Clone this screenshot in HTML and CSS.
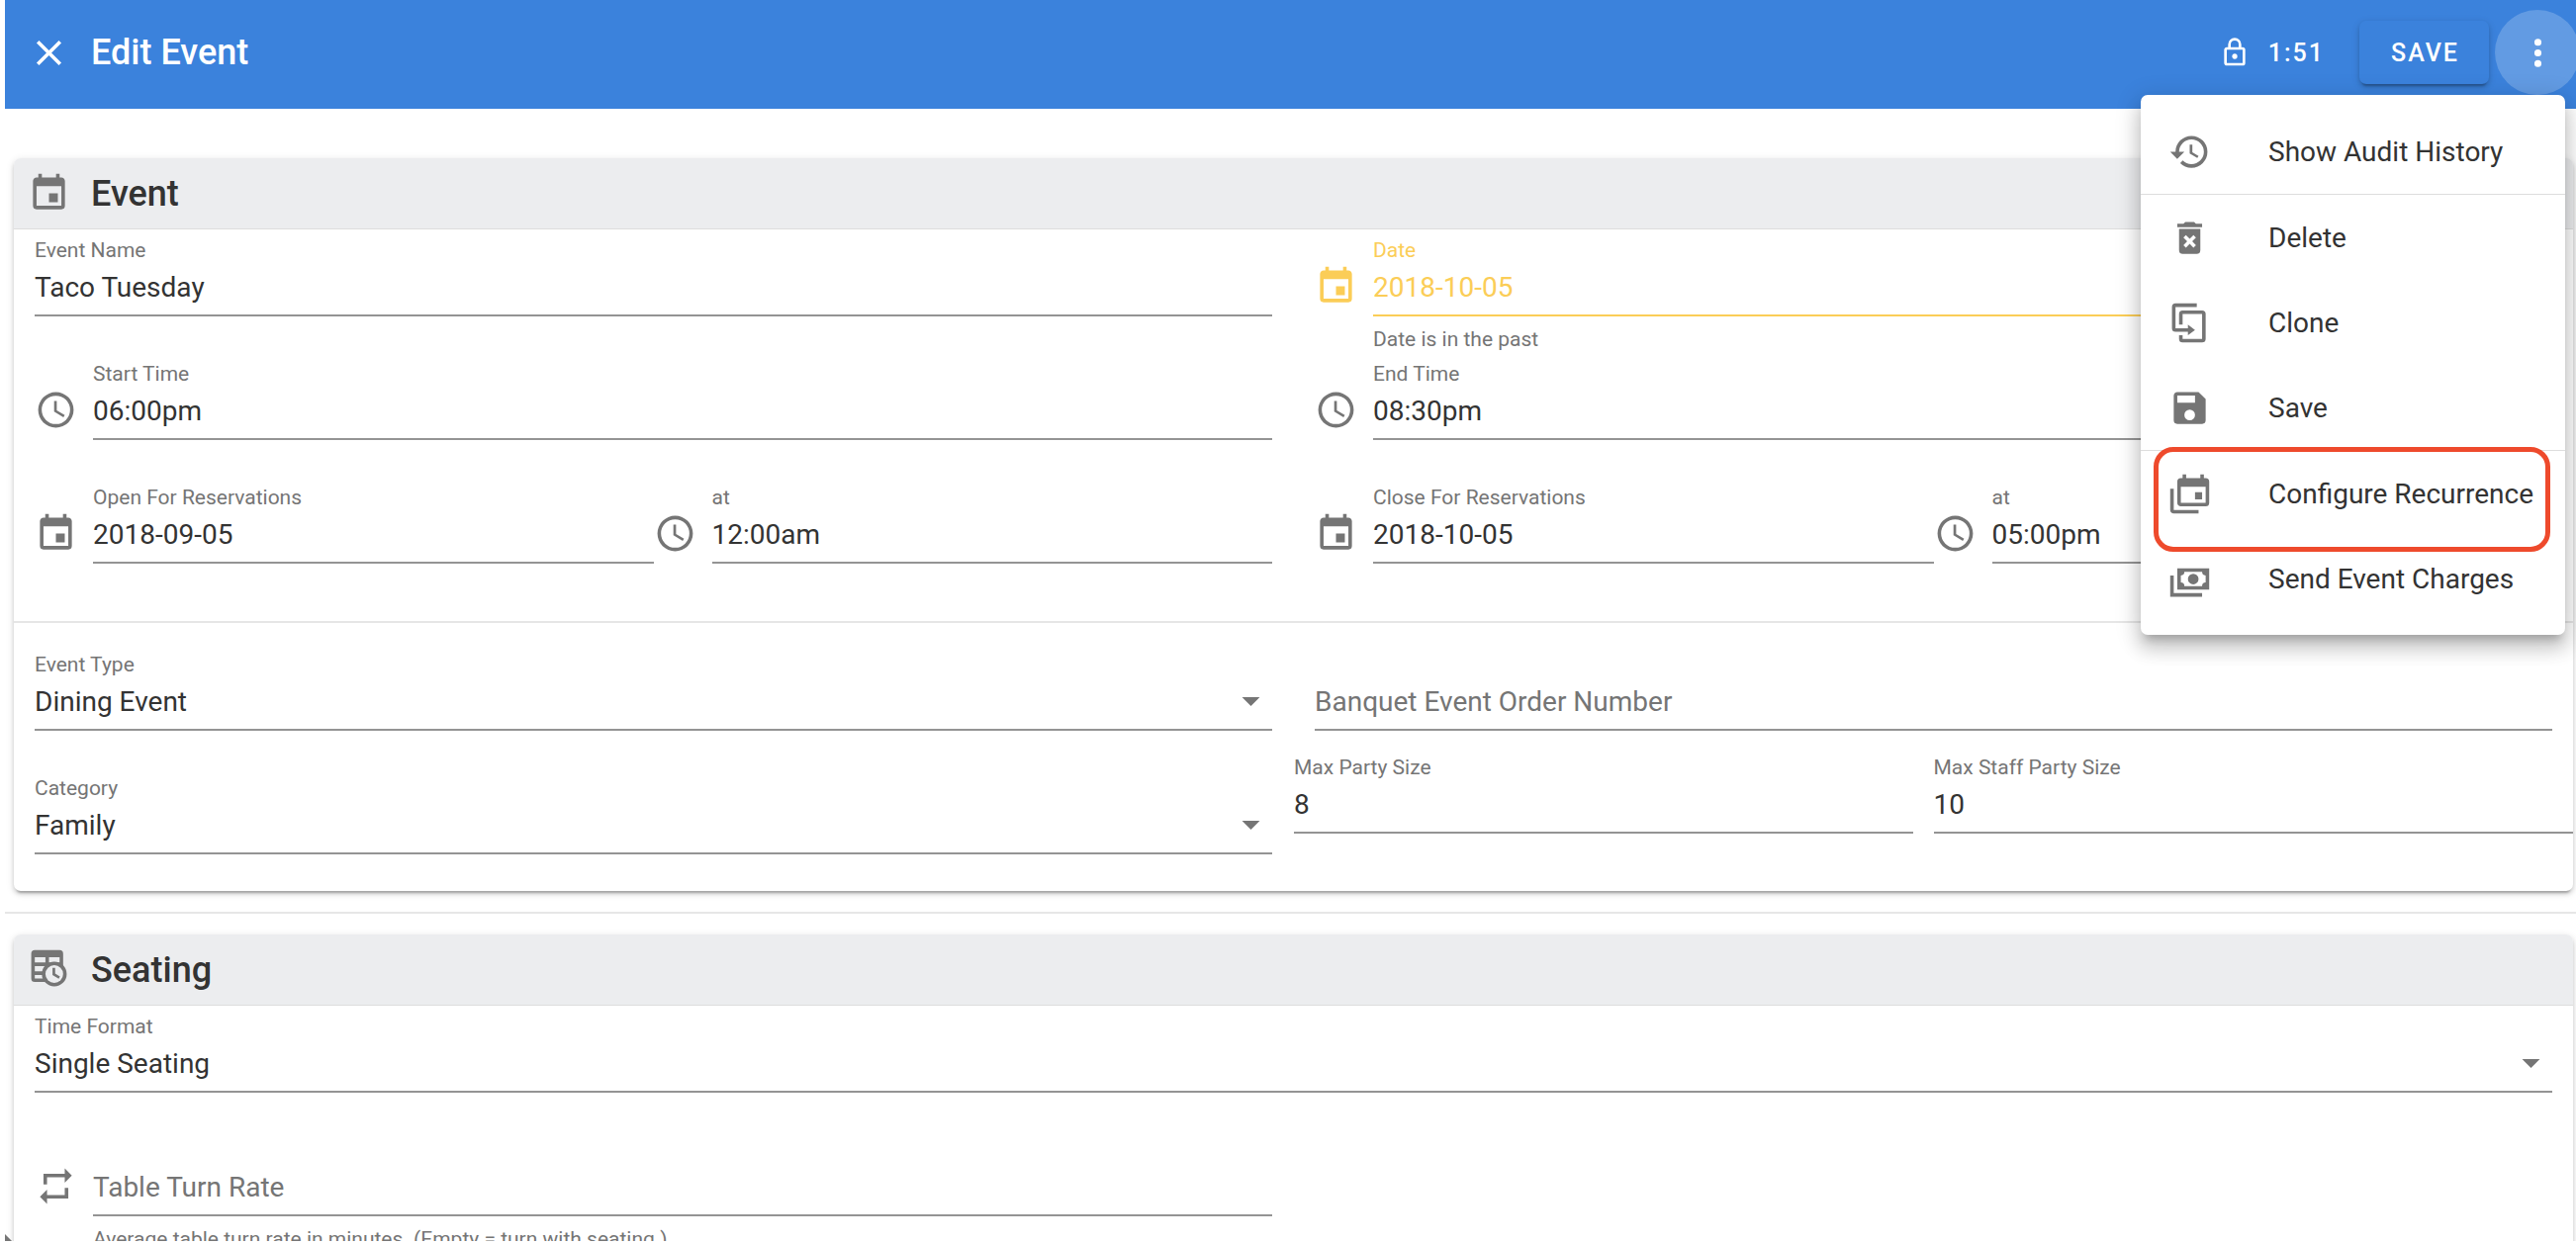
FILE: index.html
```html
<!DOCTYPE html>
<html lang="en">
<head>
    <meta charset="UTF-8">
    <meta name="viewport" content="width=device-width, initial-scale=1">
    <title>Edit Event</title>
    <link rel="stylesheet" href="styles.css">
</head>
<body>
    <!-- shared icons -->
    <svg class="sprite" aria-hidden="true">
        <symbol id="calendar" viewBox="0 0 24 24"><path d="M19,19H5V8H19M16,1V3H8V1H6V3H5C3.89,3 3,3.89 3,5V19A2,2 0 0,0 5,21H19A2,2 0 0,0 21,19V5C21,3.89 20.1,3 19,3H18V1M17,12H12V17H17V12Z"/></symbol>
        <symbol id="clock" viewBox="0 0 24 24"><path d="M12,20A8,8 0 0,0 20,12A8,8 0 0,0 12,4A8,8 0 0,0 4,12A8,8 0 0,0 12,20M12,2A10,10 0 0,1 22,12A10,10 0 0,1 12,22C6.47,22 2,17.5 2,12A10,10 0 0,1 12,2M12.5,7V12.25L17,14.92L16.25,16.15L11,13V7H12.5Z"/></symbol>
        <symbol id="menu-down" viewBox="0 0 24 24"><path d="M7,10L12,15L17,10H7Z"/></symbol>
    </svg>

    <div class="page">
        <header class="toolbar">
            <button class="icon-btn" type="button" aria-label="Close">
                <svg class="icon" viewBox="0 0 24 24"><path d="M19,6.41L17.59,5L12,10.59L6.41,5L5,6.41L10.59,12L5,17.59L6.41,19L12,13.41L17.59,19L19,17.59L13.41,12L19,6.41Z"/></svg>
            </button>
            <h1>Edit Event</h1>
            <div class="lock">
                <svg class="icon" viewBox="0 0 24 24"><path d="M12,17C10.89,17 10,16.1 10,15C10,13.89 10.89,13 12,13A2,2 0 0,1 14,15A2,2 0 0,1 12,17M18,20V10H6V20H18M18,8A2,2 0 0,1 20,10V20A2,2 0 0,1 18,22H6C4.89,22 4,21.1 4,20V10C4,8.89 4.89,8 6,8H7V6A5,5 0 0,1 12,1A5,5 0 0,1 17,6V8H18M12,3A3,3 0 0,0 9,6V8H15V6A3,3 0 0,0 12,3Z"/></svg>
                <span>1:51</span>
            </div>
            <button class="save-btn" type="button">SAVE</button>
            <div class="more">
                <button class="more-btn" type="button" aria-label="More actions">
                    <svg class="icon" viewBox="0 0 24 24"><path d="M12,16A2,2 0 0,1 14,18A2,2 0 0,1 12,20A2,2 0 0,1 10,18A2,2 0 0,1 12,16M12,10A2,2 0 0,1 14,12A2,2 0 0,1 12,14A2,2 0 0,1 10,12A2,2 0 0,1 12,10M12,4A2,2 0 0,1 14,6A2,2 0 0,1 12,8A2,2 0 0,1 10,6A2,2 0 0,1 12,4Z"/></svg>
                </button>
                <div class="menu">
                    <button type="button">
                        <svg class="icon" viewBox="0 0 24 24"><path d="M13.5,8H12V13L16.28,15.54L17,14.33L13.5,12.25V8M13,3A9,9 0 0,0 4,12H1L4.96,16.03L9,12H6A7,7 0 0,1 13,5A7,7 0 0,1 20,12A7,7 0 0,1 13,19C11.07,19 9.32,18.21 8.06,16.94L6.64,18.36C8.27,20 10.5,21 13,21A9,9 0 0,0 22,12A9,9 0 0,0 13,3"/></svg>
                        Show Audit History
                    </button>
                    <hr>
                    <button type="button">
                        <svg class="icon" viewBox="0 0 24 24"><path d="M6,19A2,2 0 0,0 8,21H16A2,2 0 0,0 18,19V7H6V19M8.46,11.88L9.87,10.47L12,12.59L14.12,10.47L15.53,11.88L13.41,14L15.53,16.12L14.12,17.53L12,15.41L9.88,17.53L8.47,16.12L10.59,14L8.46,11.88M15.5,4L14.5,3H9.5L8.5,4H5V6H19V4H15.5Z"/></svg>
                        Delete
                    </button>
                    <button type="button">
                        <svg class="icon" viewBox="0 0 24 24"><path d="M11,17H4A2,2 0 0,1 2,15V3A2,2 0 0,1 4,1H16V3H4V15H11V13L15,16L11,19V17M19,21V7H8V13H6V7A2,2 0 0,1 8,5H19A2,2 0 0,1 21,7V21A2,2 0 0,1 19,23H8A2,2 0 0,1 6,21V19H8V21H19Z"/></svg>
                        Clone
                    </button>
                    <button type="button">
                        <svg class="icon" viewBox="0 0 24 24"><path d="M15,9H5V5H15M12,19A3,3 0 0,1 9,16A3,3 0 0,1 12,13A3,3 0 0,1 15,16A3,3 0 0,1 12,19M17,3H5C3.89,3 3,3.9 3,5V19A2,2 0 0,0 5,21H19A2,2 0 0,0 21,19V7L17,3Z"/></svg>
                        Save
                    </button>
                    <hr>
                    <button class="highlight" type="button">
                        <svg class="icon" viewBox="0 0 24 24"><path d="M21,17V8H7V17H21M21,3A2,2 0 0,1 23,5V17A2,2 0 0,1 21,19H7C5.89,19 5,18.1 5,17V5A2,2 0 0,1 7,3H8V1H10V3H18V1H20V3H21M3,21H17V23H3C1.89,23 1,22.1 1,21V9H3V21M19,15H15V11H19V15Z"/></svg>
                        Configure Recurrence
                    </button>
                    <button type="button">
                        <svg class="icon" viewBox="0 0 24 24"><path d="M5,6H23V18H5V6M14,9A3,3 0 0,1 17,12A3,3 0 0,1 14,15A3,3 0 0,1 11,12A3,3 0 0,1 14,9M9,8A2,2 0 0,1 7,10V14A2,2 0 0,1 9,16H19A2,2 0 0,1 21,14V10A2,2 0 0,1 19,8H9M1,10H3V20H19V22H1V10Z"/></svg>
                        Send Event Charges
                    </button>
                </div>
            </div>
        </header>

        <main>
            <section class="card">
                <div class="card-title">
                    <svg class="icon"><use href="#calendar"/></svg>
                    <h2>Event</h2>
                </div>
                <div class="grid">
                    <div class="field">
                        <label for="name">Event Name</label>
                        <input id="name" type="text" value="Taco Tuesday">
                    </div>
                    <div class="field with-icon warning">
                        <svg class="icon"><use href="#calendar"/></svg>
                        <label for="date">Date</label>
                        <input id="date" type="text" value="2018-10-05">
                        <p class="hint">Date is in the past</p>
                    </div>
                    <div class="field with-icon">
                        <svg class="icon"><use href="#clock"/></svg>
                        <label for="start">Start Time</label>
                        <input id="start" type="text" value="06:00pm">
                    </div>
                    <div class="field with-icon">
                        <svg class="icon"><use href="#clock"/></svg>
                        <label for="end">End Time</label>
                        <input id="end" type="text" value="08:30pm">
                    </div>
                    <div class="pair">
                        <div class="field with-icon">
                            <svg class="icon"><use href="#calendar"/></svg>
                            <label for="open-date">Open For Reservations</label>
                            <input id="open-date" type="text" value="2018-09-05">
                        </div>
                        <div class="field with-icon">
                            <svg class="icon"><use href="#clock"/></svg>
                            <label for="open-time">at</label>
                            <input id="open-time" type="text" value="12:00am">
                        </div>
                    </div>
                    <div class="pair">
                        <div class="field with-icon">
                            <svg class="icon"><use href="#calendar"/></svg>
                            <label for="close-date">Close For Reservations</label>
                            <input id="close-date" type="text" value="2018-10-05">
                        </div>
                        <div class="field with-icon">
                            <svg class="icon"><use href="#clock"/></svg>
                            <label for="close-time">at</label>
                            <input id="close-time" type="text" value="05:00pm">
                        </div>
                    </div>
                </div>
                <hr class="split">
                <div class="grid">
                    <div class="field">
                        <label for="type">Event Type</label>
                        <div class="select">
                            <select id="type"><option>Dining Event</option></select>
                            <svg class="icon"><use href="#menu-down"/></svg>
                        </div>
                    </div>
                    <div class="field no-label">
                        <input type="text" aria-label="Banquet Event Order Number" placeholder="Banquet Event Order Number">
                    </div>
                    <div class="field">
                        <label for="category">Category</label>
                        <div class="select">
                            <select id="category"><option>Family</option></select>
                            <svg class="icon"><use href="#menu-down"/></svg>
                        </div>
                    </div>
                    <div class="pair sizes">
                        <div class="field">
                            <label for="max-party">Max Party Size</label>
                            <input id="max-party" type="text" value="8">
                        </div>
                        <div class="field">
                            <label for="max-staff">Max Staff Party Size</label>
                            <input id="max-staff" type="text" value="10">
                        </div>
                    </div>
                </div>
            </section>

            <hr>

            <section class="card">
                <div class="card-title">
                    <svg class="icon" viewBox="0 0 24 24">
                        <path fill-rule="evenodd" d="M4,1H18A2,2 0 0,1 20,3V17A2,2 0 0,1 18,19H4A2,2 0 0,1 2,17V3A2,2 0 0,1 4,1M4,5V8H10V5H4M12,5V8H18V5H12M4,10V13H10V10H4M4,15V17H10V15H4Z"/>
                        <circle cx="15" cy="14.5" r="7"/>
                        <circle class="clock-face" cx="15" cy="14.5" r="5"/>
                        <path d="M14,11H15.5V14.3L18.2,15.9L17.5,17.1L14,15.1V11Z"/>
                    </svg>
                    <h2>Seating</h2>
                </div>
                <div class="grid">
                    <div class="field wide">
                        <label for="format">Time Format</label>
                        <div class="select">
                            <select id="format"><option>Single Seating</option></select>
                            <svg class="icon"><use href="#menu-down"/></svg>
                        </div>
                    </div>
                    <div class="field with-icon no-label">
                        <svg class="icon" viewBox="0 0 24 24"><path d="M17,17H7V14L3,18L7,22V19H19V13H17M7,7H17V10L21,6L17,2V5H5V11H7V7Z"/></svg>
                        <input type="text" aria-label="Table Turn Rate" placeholder="Table Turn Rate">
                        <p class="hint">Average table turn rate in minutes. (Empty = turn with seating.)</p>
                    </div>
                </div>
            </section>
        </main>
    </div>
</body>
</html>
```

FILE: styles.css
```css
*, *::after {
    box-sizing: border-box;
}
body {
    margin: 0;
    padding-left: 5px;
    background: #fff;
    color: #333;
    font-family: Roboto, sans-serif;
    font-size: 28px;
}
button, input, select {
    font: inherit;
    color: inherit;
    border: 0;
    background: none;
    padding: 0;
    border-radius: 0;
}
h1, h2, p {
    margin: 0;
}
hr {
    height: 2px;
    margin: 0;
    border: 0;
    background: #e6e6e6;
}
.sprite {
    display: none;
}
.icon {
    flex: none;
    display: block;
    width: 43px;
    height: 43px;
    fill: #757575;
}
.page {
    position: relative;
    height: calc(100vh - 3px);
    overflow: hidden;
}
/* dark window corner */
.page::after {
    content: "";
    position: absolute;
    left: 0;
    bottom: 0;
    border-top: 7px solid transparent;
    border-left: 7px solid #757575;
}

/* top bar */
.toolbar {
    position: relative;
    z-index: 2;
    display: flex;
    align-items: center;
    height: 110px;
    padding: 0 0 4px 23px;
    background: #3b82dc;
    color: #fff;
}
.toolbar h1 {
    flex: 1;
    margin-left: 21px;
    font-size: 36px;
    font-weight: 500;
}
.icon-btn .icon, .more-btn .icon {
    fill: #fff;
}
.lock {
    display: flex;
    align-items: center;
    gap: 18px;
    margin-right: 35px;
    font-size: 25px;
    font-weight: 500;
    letter-spacing: 2px;
}
.lock .icon {
    width: 32px;
    height: 32px;
    fill: #fff;
}
.save-btn {
    height: 64px;
    padding: 0 30px 0 32px;
    border-radius: 7px;
    font-size: 25px;
    font-weight: 500;
    letter-spacing: 2px;
    box-shadow: 0 5px 2px -3px rgba(0, 0, 0, .2), 0 3px 4px rgba(0, 0, 0, .14), 0 2px 9px rgba(0, 0, 0, .12);
}
.more {
    position: relative;
    margin: 0 -4px 0 6px;
}
.more-btn {
    display: flex;
    align-items: center;
    justify-content: center;
    width: 86px;
    height: 86px;
    border-radius: 50%;
    background: rgba(255, 255, 255, .2);
}

/* dropdown over the page */
.menu {
    position: absolute;
    top: 86px;
    right: 15px;
    width: 429px;
    padding: 14px 0;
    border-radius: 7px;
    background: #fff;
    color: #333;
    box-shadow: 0 9px 9px -5px rgba(0, 0, 0, .2), 0 14px 18px 2px rgba(0, 0, 0, .14), 0 5px 25px 4px rgba(0, 0, 0, .12);
}
.menu button {
    position: relative;
    display: flex;
    align-items: center;
    gap: 58px;
    width: 100%;
    height: 86px;
    padding: 0 28px;
    white-space: nowrap;
}
.menu hr {
    height: 1px;
    background: #ddd;
}
.menu .highlight::after {
    content: "";
    position: absolute;
    top: -4px;
    left: 13px;
    right: 15px;
    height: 106px;
    border: 5px solid #ee4a2c;
    border-radius: 20px;
}

/* cards */
main {
    padding-top: 50px;
}
main > hr {
    margin: 21px 0;
}
.card {
    margin: 0 3px 0 9px;
    border-radius: 7px;
    box-shadow: 0 5px 2px -3px rgba(0, 0, 0, .2), 0 3px 4px rgba(0, 0, 0, .14), 0 2px 9px rgba(0, 0, 0, .12);
}
.card-title {
    display: flex;
    align-items: center;
    gap: 21px;
    height: 72px;
    padding: 0 14px;
    border-bottom: 1px solid #ddd;
    border-radius: 7px 7px 0 0;
    background: #ecedef;
}
.card-title h2 {
    font-size: 36px;
    font-weight: 500;
}
.clock-face {
    fill: #ecedef;
}
.split {
    margin: 21px 0;
}
.grid {
    display: grid;
    grid-template-columns: 1fr 1fr;
    column-gap: 43px;
    padding: 0 21px;
}
.wide {
    grid-column: 1 / -1;
}
.pair {
    display: grid;
    grid-template-columns: 1fr 1fr;
}
.sizes {
    margin: -21px -21px 21px;
}
.sizes .field:first-child {
    margin-right: 21px;
}

/* form fields */
.field {
    position: relative;
    height: 125px;
    padding-top: 9px;
}
.field label {
    display: block;
    margin-bottom: 7px;
    font-size: 21px;
    line-height: 24px;
    color: #757575;
}
.field input, .field select {
    display: block;
    width: 100%;
    height: 48px;
    padding-bottom: 10px;
    border-bottom: 2px solid #949494;
    outline: 0;
}
.field input::placeholder {
    color: #757575;
    opacity: 1;
}
.no-label {
    padding-top: 40px;
}
.with-icon {
    padding-left: 59px;
}
.with-icon > .icon {
    position: absolute;
    top: 36px;
    left: 0;
}
.select {
    display: flex;
    align-items: flex-start;
}
.select select {
    appearance: none;
}
.select .icon {
    margin: -4px 0 0 -43px;
    pointer-events: none;
}
.hint {
    margin-top: 11px;
    font-size: 21px;
    line-height: 24px;
    color: #757575;
}
.warning label, .warning input {
    color: #fbcd57;
}
.warning input {
    border-color: #fbcd57;
}
.warning .icon {
    fill: #fbcd57;
}
```
